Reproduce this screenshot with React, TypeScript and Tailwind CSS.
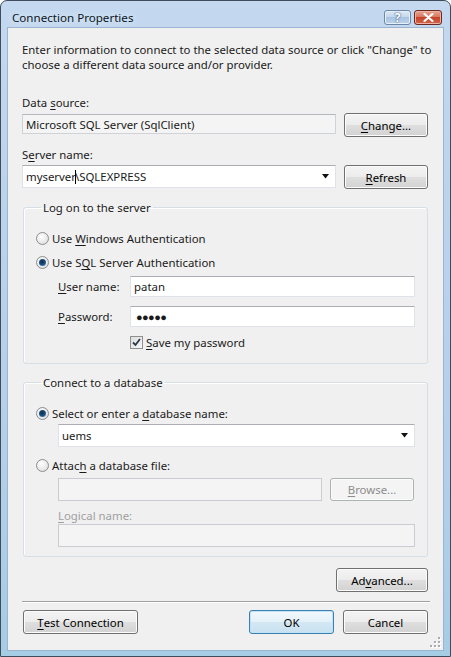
import React from "react";

type Kids = { children?: React.ReactNode };

const Key = ({ children }: Kids) => (
  <span className="underline decoration-1 underline-offset-[2px]">{children}</span>
);

function Button({
  children,
  className = "",
  variant = "normal",
}: Kids & { className?: string; variant?: "normal" | "default" | "disabled" }) {
  const look =
    variant === "default"
      ? "border-[#3c7fb1] bg-[linear-gradient(#f1f8fc,#e4f1f9_50%,#d4e8f4_50%,#c9e1f0)] shadow-[inset_0_0_0_1px_#bfe4f8] text-black"
      : variant === "disabled"
      ? "border-[#adb2b5] bg-[#f4f4f4] text-[#8d8d8d] shadow-[inset_0_0_0_1px_#fbfbfb]"
      : "border-[#707070] bg-[linear-gradient(#f4f4f4,#ececec_50%,#dfdfdf_50%,#d2d2d2)] shadow-[inset_0_0_0_1px_#fcfcfc] text-black";
  return (
    <div
      className={`flex shrink-0 items-center justify-center rounded-[3px] border ${look} ${className}`}
    >
      {children}
    </div>
  );
}

function TextBox({
  children,
  className = "",
  disabled = false,
  readOnly = false,
}: Kids & { className?: string; disabled?: boolean; readOnly?: boolean }) {
  const look = disabled
    ? "border-[#c9cdd1] bg-[#f4f4f4]"
    : readOnly
    ? "border-[#cfd3d7] border-t-[#b4b7bd] bg-[#f4f4f4]"
    : "border-[#dfe3e8] border-t-[#abadb3] bg-white";
  return (
    <div className={`flex items-center border pl-[3px] ${look} ${className}`}>{children}</div>
  );
}

function ComboBox({ value, className = "" }: { value: React.ReactNode; className?: string }) {
  return (
    <div
      className={`flex items-center border border-[#dfe3e8] border-t-[#abadb3] bg-white pl-[3px] pr-[5px] ${className}`}
    >
      <div className="flex-1">{value}</div>
      <svg width="8" height="5" viewBox="0 0 8 5">
        <path d="M0 0 H7 L3.5 4.5 Z" fill="#111" />
      </svg>
    </div>
  );
}

function Radio({ checked = false }: { checked?: boolean }) {
  return (
    <span className="flex h-[13px] w-[13px] shrink-0 items-center justify-center rounded-full border border-[#8b8e91] bg-[radial-gradient(circle_at_40%_35%,#ffffff,#e6e6e6_65%,#cdcdcd)]">
      {checked && (
        <span className="h-[7px] w-[7px] rounded-full bg-[radial-gradient(circle_at_45%_40%,#0f2c4c,#1e5284_55%,#6fb0e0)]" />
      )}
    </span>
  );
}

function CheckBox({ checked = false }: { checked?: boolean }) {
  return (
    <span className="flex h-[13px] w-[13px] shrink-0 items-center justify-center border border-[#8e8f8f] bg-[linear-gradient(135deg,#dcdcdc,#f7f7f7)]">
      {checked && (
        <svg width="11" height="11" viewBox="0 0 11 11">
          <path d="M2 5.5 L4.5 8 L9 2" fill="none" stroke="#2a3a4a" strokeWidth="1.8" />
        </svg>
      )}
    </span>
  );
}

function Group({ title, children, className = "" }: Kids & { title: string; className?: string }) {
  return (
    <fieldset
      className={`ml-[1px] rounded-[3px] border border-[#d5dfe5] shadow-[inset_1px_1px_0_#ffffff] ${className}`}
    >
      <legend className="ml-[5px] px-[2px] leading-[15px]">{title}</legend>
      {children}
    </fieldset>
  );
}

function TitleButtons() {
  return (
    <div className="flex gap-[3px] pt-[9px]">
      <div className="flex h-[15px] w-[27px] items-center justify-center rounded-[3px] border border-[#6d87a6] bg-[linear-gradient(#dbe8f5,#c2d6ec_50%,#a9c4e2_50%,#bcd3ec)] shadow-[inset_0_0_0_1px_#e8f0f9]">
        <span className="text-[12px] font-bold leading-none text-white [text-shadow:0_0_1px_#3d5c80,0_0_2px_#3d5c80]">
          ?
        </span>
      </div>
      <div className="flex h-[15px] w-[28px] items-center justify-center rounded-[3px] border border-[#6b2a1f] bg-[linear-gradient(#e8a493,#d8735c_50%,#c4442a_50%,#d2644a)] shadow-[inset_0_0_0_1px_#eeb3a3]">
        <svg width="11" height="9" viewBox="0 0 11 9">
          <path d="M1.5 1 L9.5 8 M9.5 1 L1.5 8" stroke="#ffffff" strokeWidth="2.2" strokeLinecap="round" />
        </svg>
      </div>
    </div>
  );
}

function SizeGrip() {
  const dots = [
    [8, 0],
    [8, 4],
    [4, 4],
    [8, 8],
    [4, 8],
    [0, 8],
  ];
  return (
    <svg className="absolute bottom-[2px] right-[2px]" width="11" height="11" viewBox="0 0 11 11">
      {dots.map(([x, y]) => (
        <g key={`${x}-${y}`}>
          <rect x={x + 1} y={y + 1} width="2" height="2" fill="#ffffff" />
          <rect x={x} y={y} width="2" height="2" fill="#a9acb0" />
        </g>
      ))}
    </svg>
  );
}

export default function App() {
  return (
    <div className="h-[657px] w-[451px] bg-white font-['Noto_Sans','Open_Sans',sans-serif] text-[11.4px] leading-[15px] text-[#1a1a1a]">
      <div className="flex h-full w-full flex-col rounded-t-[7px] border border-[#3e4c5e] bg-[linear-gradient(#c4d9f0,#bcd3ec_30%,#b4cfe9_70%,#a5cde4)]">
        {/* title bar */}
        <div className="flex h-[27px] shrink-0 justify-between pl-[11px] pr-[8px]">
          <div className="mt-[9px] text-[11.6px] text-[#0b1622] [text-shadow:0_0_6px_#eaf2fb]">
            Connection Properties
          </div>
          <TitleButtons />
        </div>

        {/* client area */}
        <div className="relative mx-[7px] flex h-[622px] flex-col bg-[#f0f0f0] pl-[14px] pr-[15px] pt-[14px] shadow-[0_0_0_1px_#9bb4d0]">
          <p className="whitespace-nowrap">
            Enter information to connect to the selected data source or click "Change" to
            <br />
            choose a different data source and/or provider.
          </p>

          <div className="mt-[23px]">
            Data <Key>s</Key>ource:
          </div>
          <div className="mt-[3px] flex items-start justify-between">
            <TextBox readOnly className="mt-[1px] h-[20px] w-[314px]">
              Microsoft SQL Server (SqlClient)
            </TextBox>
            <Button className="h-[24px] w-[84px]">
              <Key>C</Key>hange...
            </Button>
          </div>

          <div className="mt-[10px]">
            S<Key>e</Key>rver name:
          </div>
          <div className="mt-[3px] flex items-start justify-between">
            <ComboBox
              className="h-[23px] w-[314px]"
              value={
                <span className="flex items-center">
                  myserver
                  <span className="mx-[-1px] inline-block h-[14px] w-[1px] bg-black" />
                  \SQLEXPRESS
                </span>
              }
            />
            <Button className="h-[24px] w-[84px]">
              <Key>R</Key>efresh
            </Button>
          </div>

          <Group title="Log on to the server" className="mt-[11px] pb-[13px] pl-[12px] pr-[12px]">
            <div className="mt-[15px] flex h-[16px] items-center gap-[3px]">
              <Radio />
              <span>
                Use <Key>W</Key>indows Authentication
              </span>
            </div>
            <div className="mt-[8px] flex h-[16px] items-center gap-[3px]">
              <Radio checked />
              <span>
                Use S<Key>Q</Key>L Server Authentication
              </span>
            </div>
            <div className="ml-[22px] mt-[6px] flex items-center">
              <span className="w-[72px]">
                <Key>U</Key>ser name:
              </span>
              <TextBox className="h-[21px] w-[285px]">patan</TextBox>
            </div>
            <div className="ml-[22px] mt-[9px] flex items-center">
              <span className="w-[72px]">
                <Key>P</Key>assword:
              </span>
              <TextBox className="h-[21px] w-[285px] pl-[5px]">
                <span className="text-[11px] tracking-[-0.6px]">●●●●●</span>
              </TextBox>
            </div>
            <div className="ml-[94px] mt-[7px] flex h-[16px] items-center gap-[3px]">
              <CheckBox checked />
              <span>
                <Key>S</Key>ave my password
              </span>
            </div>
          </Group>

          <Group title="Connect to a database" className="mt-[11px] pb-[9px] pl-[12px] pr-[12px]">
            <div className="mt-[15px] flex h-[16px] items-center gap-[3px]">
              <Radio checked />
              <span>
                Select or enter a <Key>d</Key>atabase name:
              </span>
            </div>
            <ComboBox className="ml-[22px] mt-[3px] h-[23px] w-[357px]" value="uems" />
            <div className="mt-[10px] flex h-[16px] items-center gap-[3px]">
              <Radio />
              <span>
                Attac<Key>h</Key> a database file:
              </span>
            </div>
            <div className="ml-[22px] mt-[5px] flex w-[356px] items-center justify-between">
              <TextBox disabled className="h-[23px] w-[264px]" />
              <Button variant="disabled" className="h-[23px] w-[84px]">
                <Key>B</Key>rowse...
              </Button>
            </div>
            <div className="ml-[22px] mt-[7px] text-[#a0a0a0]">
              <Key>L</Key>ogical name:
            </div>
            <TextBox disabled className="ml-[22px] mt-[1px] h-[23px] w-[357px]" />
          </Group>

          <div className="mt-[11px] flex justify-end">
            <Button className="h-[24px] w-[92px]">
              Ad<Key>v</Key>anced...
            </Button>
          </div>

          <div className="-mr-[2px] mt-[9px] h-[1px] bg-[#a0a0a0] shadow-[0_1px_0_#ffffff]" />

          <div className="mt-[8px] flex items-center">
            <Button className="ml-[1px] h-[24px] w-[115px]">
              <Key>T</Key>est Connection
            </Button>
            <div className="flex-1" />
            <Button variant="default" className="h-[24px] w-[85px]">
              OK
            </Button>
            <Button className="ml-[9px] h-[24px] w-[85px]">Cancel</Button>
          </div>

          <SizeGrip />
        </div>
      </div>
    </div>
  );
}
